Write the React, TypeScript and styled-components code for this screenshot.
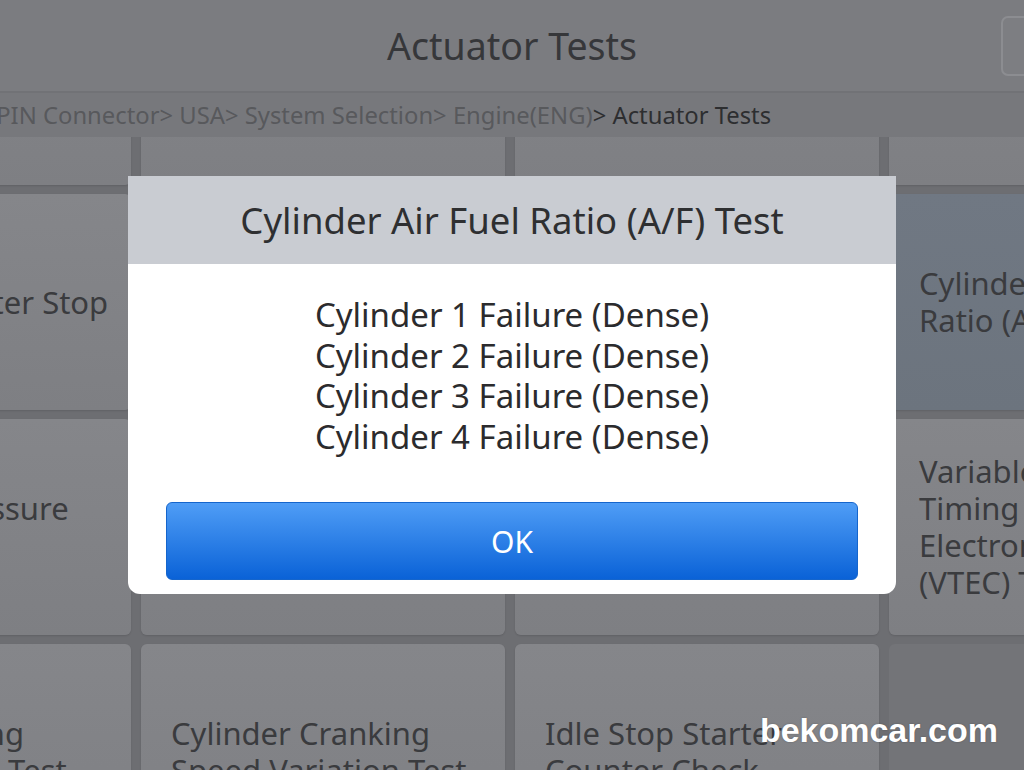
import React from 'react'
import styled, { createGlobalStyle } from 'styled-components'

const GlobalStyle = createGlobalStyle`
  html, body { margin: 0; padding: 0; }
  body { font-family: "Noto Sans", "Open Sans", sans-serif; background: #6d6e72; overflow: hidden; }
`

const Screen = styled.div`
  width: 1024px; height: 770px; position: relative; overflow: hidden;
  display: flex; flex-direction: column;
`

const Header = styled.header`
  flex: none; height: 91px; background: #7b7c80; border-bottom: 2px solid #717276;
  display: grid; grid-template-columns: 1fr auto 1fr; align-items: center;
`

const Title = styled.h1`
  margin: 0; font-size: 37.5px; font-weight: 400; color: #36373a; grid-column: 2;
`

const HeaderButton = styled.div`
  grid-column: 3; justify-self: end; width: 80px; height: 60px; margin-right: -57px;
  border: 2px solid #8c8d91; border-radius: 7px; box-sizing: border-box; background: #7d7e82;
`

const Crumbs = styled.div`
  flex: none; height: 44px; background: #77787c; display: flex; align-items: center;
  white-space: nowrap; font-size: 23.8px; color: #58595c;
`

const CrumbPath = styled.span`margin-left: -31px;`
const CrumbLast = styled.span`color: #2d2e30;`

const Viewport = styled.div`flex: 1; overflow: hidden; background: #6d6e72;`

const Grid = styled.div`
  display: grid; grid-template-columns: repeat(4, 364px); grid-auto-rows: 216px;
  gap: 9px 10px; margin: -168px 0 0 -233px;
`

const Tile = styled.div<{ $selected?: boolean; $empty?: boolean }>`
  border-radius: 6px; padding: 0 30px; box-sizing: border-box;
  display: flex; flex-direction: column; justify-content: center;
  font-size: 31px; line-height: 37px; color: #3a3b3e; white-space: nowrap;
  background: ${p => p.$empty ? '#737478' : p.$selected ? 'linear-gradient(#707883, #6c747e)' : 'linear-gradient(#85868a, #7e7f83)'};
  box-shadow: ${p => p.$empty ? 'none' : '0 1px 2px rgba(0,0,0,0.12)'};
`

const Overlay = styled.div`
  position: absolute; inset: 0; display: flex; align-items: center; justify-content: center;
`

const Dialog = styled.div`
  width: 768px; background: #fff; border-radius: 0 0 12px 12px; overflow: hidden;
`

const DialogTitle = styled.div`
  height: 88px; background: #c9ccd2; display: flex; align-items: center; justify-content: center;
  font-size: 36.5px; color: #2e2f31;
`

const DialogBody = styled.div`padding: 31px 38px 14px; text-align: center;`

const Line = styled.div`font-size: 33px; line-height: 40.5px; color: #2b2b2d;`

const OkButton = styled.button`
  margin-top: 45px; width: 100%; height: 78px; border: 1px solid #1565cc; border-radius: 6px;
  background: linear-gradient(#4f9df6, #0a62d7); color: #fff; font-family: inherit; font-size: 30px;
`

const Watermark = styled.div`
  position: absolute; right: 26px; top: 711px; font-family: "Liberation Sans", Arial, sans-serif;
  font-weight: 700; font-size: 34px; color: #fff; text-shadow: 0 0 2px rgba(0,0,0,0.25);
`

const tiles: { lines: string[]; selected?: boolean; empty?: boolean }[] = [
  { lines: ['Injector Test'] }, { lines: ['Fuel Pump Test'] }, { lines: ['Idle Air Control'] }, { lines: ['EGR Valve Test'] },
  { lines: ['Idle Stop Starter Stop'] }, { lines: [''] }, { lines: [''] }, { lines: ['Cylinder Air Fuel', 'Ratio (A/F) Test'], selected: true },
  { lines: ['Fuel Tank Pressure', 'Test'] }, { lines: [''] }, { lines: [''] }, { lines: ['Variable Valve', 'Timing & Lift', 'Electronic Control', '(VTEC) Test'] },
  { lines: ['Motor Learning', 'Idle Speed Up Test'] }, { lines: ['Cylinder Cranking', 'Speed Variation Test'] }, { lines: ['Idle Stop Starter', 'Counter Check'] }, { lines: [], empty: true },
]

export default function App() {
  return (
    <Screen>
      <GlobalStyle />
      <Header>
        <Title>Actuator Tests</Title>
        <HeaderButton />
      </Header>
      <Crumbs>
        <CrumbPath>16PIN Connector&gt; USA&gt; System Selection&gt; Engine(ENG)</CrumbPath>
        <CrumbLast>&gt; Actuator Tests</CrumbLast>
      </Crumbs>
      <Viewport>
        <Grid>
          {tiles.map((t, i) => (
            <Tile key={i} $selected={t.selected} $empty={t.empty}>
              {t.lines.map((l, j) => <div key={j}>{l}</div>)}
            </Tile>
          ))}
        </Grid>
      </Viewport>
      <Overlay>
        <Dialog>
          <DialogTitle>Cylinder Air Fuel Ratio (A/F) Test</DialogTitle>
          <DialogBody>
            {[1, 2, 3, 4].map(n => <Line key={n}>Cylinder {n} Failure (Dense)</Line>)}
            <OkButton>OK</OkButton>
          </DialogBody>
        </Dialog>
      </Overlay>
      <Watermark>bekomcar.com</Watermark>
    </Screen>
  )
}
